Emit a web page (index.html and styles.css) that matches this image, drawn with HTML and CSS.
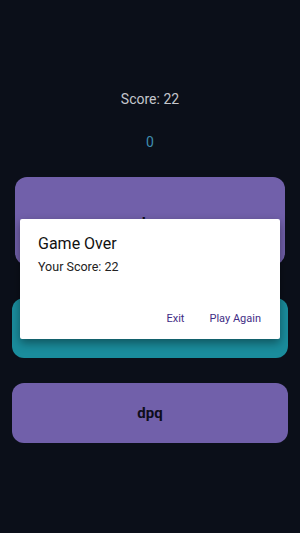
FILE: index.html
```html
<!DOCTYPE html>
<html lang="en">
<head>
    <meta charset="UTF-8">
    <meta name="viewport" content="width=device-width, initial-scale=1.0">
    <title>Game Over</title>
    <link rel="stylesheet" href="styles.css">
</head>
<body>

    <div class="screen">
        <div class="score">Score: 22</div>
        <div class="timer">0</div>

        <div class="cards">
            <div class="card card-top">dqp</div>
            <div class="card card-teal"></div>
            <div class="card">dpq</div>
        </div>

        <div class="dialog">
            <h2>Game Over</h2>
            <p>Your Score: 22</p>
            <div class="dialog-actions">
                <button>Exit</button>
                <button>Play Again</button>
            </div>
        </div>
    </div>

</body>
</html>
```

FILE: styles.css
```css
body {
    font-family: 'Roboto', 'Liberation Sans', sans-serif;
    background-color: #0b0f19;
    margin: 0;
    padding: 0;
}

.screen {
    position: relative;
    width: 300px;
    height: 533px;
    display: flex;
    flex-direction: column;
    align-items: center;
}

.score {
    margin-top: 90px;
    font-size: 14px;
    line-height: 18px;
    color: #c4c6cc;
}

.timer {
    margin-top: 25px;
    font-size: 14px;
    line-height: 18px;
    color: #3f8cae;
}

.cards {
    margin-top: 26px;
    width: 276px;
    display: flex;
    flex-direction: column;
    align-items: center;
}

.card {
    width: 276px;
    height: 60px;
    border-radius: 12px;
    background-color: #7160aa;
    display: flex;
    align-items: center;
    justify-content: center;
    font-size: 15px;
    font-weight: bold;
    color: #0d0d1a;
}

.card-top {
    width: 270px;
    height: 88px;
    box-sizing: border-box;
    padding-top: 3px;
    margin-bottom: 33px;
}

.card-teal {
    background-color: #1a8c9c;
    margin-bottom: 25px;
}

.dialog {
    position: absolute;
    top: 219px;
    left: 20px;
    width: 260px;
    height: 120px;
    box-sizing: border-box;
    padding: 15px 18px 0 18px;
    background: #fff;
    border-radius: 2px;
    box-shadow: 0 4px 10px rgba(0, 0, 0, 0.4);
}

.dialog h2 {
    margin: 0;
    font-size: 16px;
    line-height: 20px;
    font-weight: normal;
    color: #111;
}

.dialog p {
    margin: 5px 0 0 0;
    font-size: 12.5px;
    line-height: 16px;
    color: #222;
}

.dialog-actions {
    display: flex;
    justify-content: flex-end;
    gap: 25px;
    margin-top: 36px;
    margin-right: 1px;
}

.dialog-actions button {
    padding: 0;
    border: none;
    background: transparent;
    font-family: inherit;
    font-size: 11px;
    font-weight: normal;
    line-height: 16px;
    color: #3f2d86;
    cursor: pointer;
}
```
